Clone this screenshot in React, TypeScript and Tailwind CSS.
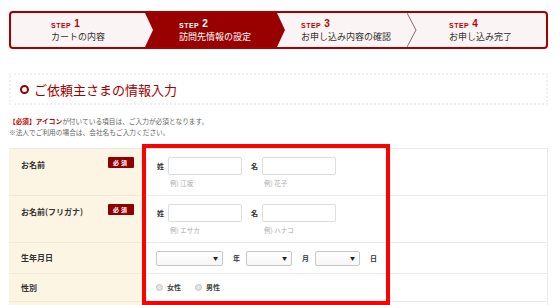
import React from 'react';

const font = { fontFamily: '"Noto Sans CJK JP", "Noto Sans", sans-serif' };

const steps = [
  { no: '1', label: 'カートの内容', w: 'w-[134px]' },
  { no: '2', label: '訪問先情報の設定', w: 'w-[132px]' },
  { no: '3', label: 'お申し込み内容の確認', w: 'w-[130px]' },
  { no: '4', label: 'お申し込み完了', w: 'flex-1' }
];

const StepBar = () => <div className="flex h-[38px] border-2 border-[#a30000] rounded-[4px] overflow-hidden bg-[#fbf4f4]">
    {steps.map((s, i) => {
    const active = i === 1;
    return <div key={s.no} className={`relative flex items-center justify-center ${s.w} ${active ? 'bg-[#990000]' : ''} ${i > 0 ? 'pl-[8px]' : ''}`}>
          <div className="leading-none">
            <div className={`flex items-end gap-[3px] font-bold ${active ? 'text-white' : 'text-[#c00000]'}`}>
              <span className="text-[7px] tracking-[0.5px]" style={{ fontFamily: '"Liberation Sans", sans-serif' }}>STEP</span>
              <span className="text-[10px]" style={{ fontFamily: '"Liberation Sans", sans-serif' }}>{s.no}</span>
            </div>
            <div className={`mt-[3px] text-[9px] ${active ? 'text-white' : 'text-[#333]'}`}>{s.label}</div>
          </div>
          {i === 0 && <svg className="absolute top-0 -right-[8px] z-10" width="8" height="34" viewBox="0 0 8 34">
              <polygon points="0,0 8,17 0,34" fill="#fbf4f4" />
            </svg>}
          {i === 1 && <svg className="absolute top-0 -right-[8px] z-10" width="8" height="34" viewBox="0 0 8 34">
              <polygon points="0,0 8,17 0,34" fill="#990000" />
            </svg>}
          {i === 2 && <svg className="absolute top-0 -right-[10px] z-10" width="10" height="34" viewBox="0 0 10 34">
              <polygon points="0,0 9,17 0,34" fill="#fbf4f4" />
              <polyline points="0,0 9,17 0,34" fill="none" stroke="#8a6b6b" strokeWidth="1" />
            </svg>}
        </div>;
  })}
  </div>;

const Badge = () => <span className="inline-flex items-center justify-center w-[26px] h-[11px] bg-[#8f0000] text-white text-[6px] font-bold tracking-[2px] rounded-[1px]">必須</span>;

const TextInput = ({ hint }: { hint: string }) => <div className="flex flex-col">
    <div className="w-[74px] h-[18px] border border-[#dedede] rounded-[2px] bg-white" />
    <span className="mt-[3px] ml-[2px] text-[6.5px] text-[#aaa] leading-[10px]">{hint}</span>
  </div>;

const NameRow = ({ label, hints }: { label: string; hints: [string, string] }) => <div className="flex">
    <div className="w-[133px] shrink-0 bg-[#fcf5e3] border-b border-[#f2ead8] flex items-start justify-between pl-[12px] pr-[8px] pt-[8px]">
      <span className="text-[8px] font-bold text-[#333] leading-[11px] mt-[2px]">{label}</span>
      <Badge />
    </div>
    <div className="flex-1 border-b border-[#ebebeb] pl-[15px] pt-[8px] h-[47px] flex gap-[9px]">
      <div className="flex gap-[4px]">
        <span className="text-[7px] font-bold text-[#333] leading-[18px]">姓</span>
        <TextInput hint={hints[0]} />
      </div>
      <div className="flex gap-[4px]">
        <span className="text-[7px] font-bold text-[#333] leading-[18px]">名</span>
        <TextInput hint={hints[1]} />
      </div>
    </div>
  </div>;

const Select = ({ w }: { w: string }) => <div className={`${w} h-[15px] border border-[#c8c8c8] rounded-[2px] bg-gradient-to-b from-white to-[#f6f6f6] flex items-center justify-end pr-[4px]`}>
    <span className="text-[5px] text-[#222]">▼</span>
  </div>;

const Radio = ({ label }: { label: string }) => <span className="flex items-center gap-[4px]">
    <span className="w-[7px] h-[7px] rounded-full border border-[#c4c4c4] bg-[#e4e4e4]" />
    <span className="text-[7px] font-bold text-[#444]">{label}</span>
  </span>;

const App = () => {
  return <div className="relative w-[560px] h-[305px] overflow-hidden bg-white" style={font}>
      <div className="ml-[9px] w-[539px] pt-[11px]">
        <StepBar />

        {/* heading */}
        <div className="mt-[24px] h-[32px] border-2 border-dotted border-[#f0f0f0] rounded-[2px] flex items-center pl-[9px] gap-[5px]">
          <span className="w-[9px] h-[9px] rounded-full border-[2px] border-[#9a0000]" />
          <h2 className="text-[13px] text-[#a10000] leading-none">ご依頼主さまの情報入力</h2>
        </div>

        <div className="mt-[11px] text-[6.7px] leading-[11px] text-[#666]">
          <p><span className="text-[#c00000] font-bold">【必須】アイコン</span>が付いている項目は、ご入力が必須となります。</p>
          <p>※法人でご利用の場合は、会社名もご入力ください。</p>
        </div>

        {/* form table */}
        <div className="mt-[10px] border-t border-r border-[#ebebeb]">
          <NameRow label="お名前" hints={['例) 江坂', '例) 花子']} />
          <NameRow label="お名前(フリガナ)" hints={['例) エサカ', '例) ハナコ']} />
          <div className="flex h-[31px]">
            <div className="w-[133px] shrink-0 bg-[#fcf5e3] border-b border-[#f2ead8] flex items-center pl-[12px]">
              <span className="text-[8px] font-bold text-[#333]">生年月日</span>
            </div>
            <div className="flex-1 border-b border-[#ebebeb] pl-[14px] flex items-center">
              <Select w="w-[67px]" />
              <span className="ml-[10px] text-[7px] font-bold text-[#333]">年</span>
              <Select w="w-[46px] ml-[6px]" />
              <span className="ml-[10px] text-[7px] font-bold text-[#333]">月</span>
              <Select w="w-[45px] ml-[6px]" />
              <span className="ml-[10px] text-[7px] font-bold text-[#333]">日</span>
            </div>
          </div>
          <div className="flex h-[28px]">
            <div className="w-[133px] shrink-0 bg-[#fcf5e3] border-b border-[#f2ead8] flex items-center pl-[12px]">
              <span className="text-[8px] font-bold text-[#333]">性別</span>
            </div>
            <div className="flex-1 border-b border-[#ebebeb] pl-[14px] flex items-center gap-[14px]">
              <Radio label="女性" />
              <Radio label="男性" />
            </div>
          </div>
          <div className="flex h-[20px]">
            <div className="w-[133px] shrink-0 bg-[#fcf5e3]" />
            <div className="flex-1" />
          </div>
        </div>
      </div>

      {/* highlight annotation */}
      <div className="absolute left-[142px] top-[144px] w-[248px] h-[161px] border-4 border-[#ff0000]" />
    </div>;
};

export default App;
